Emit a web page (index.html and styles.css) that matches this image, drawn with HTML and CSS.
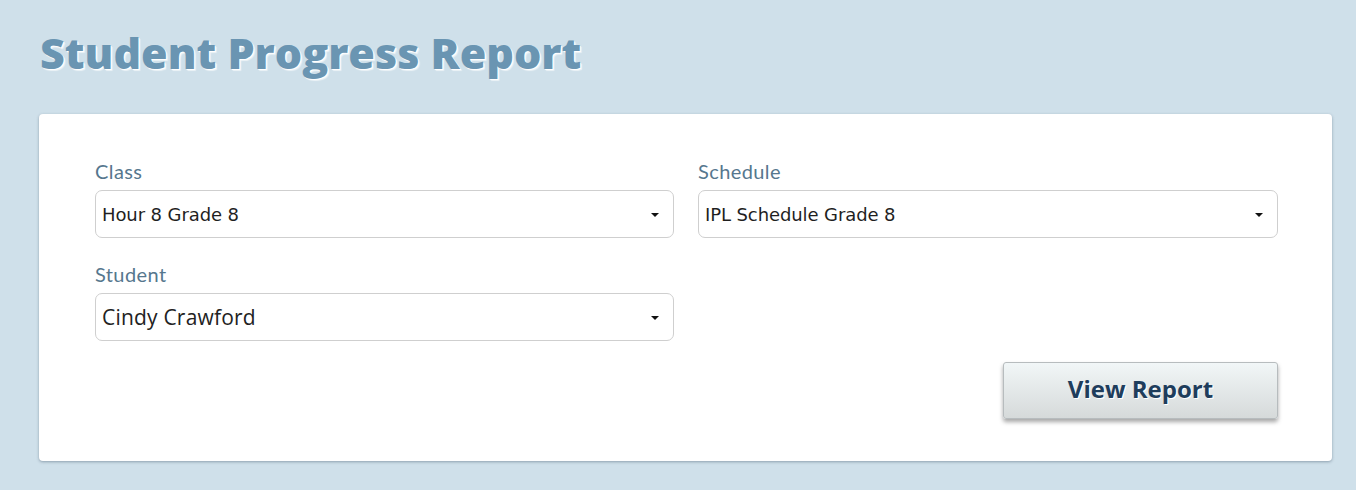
FILE: index.html
```html
<!DOCTYPE html>
<html>
<head>
<meta charset="utf-8">
<link rel="stylesheet" href="styles.css">
</head>
<body>
<h1 class="title">Student Progress Report</h1>
<div class="card">
  <div class="grid">
    <div class="field">
      <div class="label">Class</div>
      <div class="select"><span class="val">Hour 8 Grade 8</span><span class="caret"></span></div>
    </div>
    <div class="field">
      <div class="label">Schedule</div>
      <div class="select"><span class="val">IPL Schedule Grade 8</span><span class="caret"></span></div>
    </div>
    <div class="field">
      <div class="label">Student</div>
      <div class="select"><span class="val big">Cindy Crawford</span><span class="caret"></span></div>
    </div>
  </div>
  <div class="actions">
    <button class="btn">View Report</button>
  </div>
</div>
</body>
</html>
```
FILE: styles.css
```css
html, body { margin: 0; padding: 0; }
body {
  background: #cfe0ea;
  font-family: Lato, "Open Sans", sans-serif;
  width: 1356px;
  height: 490px;
  overflow: hidden;
}
.title {
  margin: 0;
  padding: 27px 0 0 40px;
  height: 86px;
  box-sizing: border-box;
  font-family: "Open Sans", sans-serif;
  font-weight: 800;
  font-size: 43px;
  line-height: 52px;
  color: #6a95b2;
  letter-spacing: 0;
  text-shadow: 1px 1px 0 #ffffff, 2px 2px 1px rgba(255,255,255,0.6);
}
.card {
  margin: 28px 24px 0 39px;
  background: #fff;
  border-radius: 4px;
  box-shadow: 0 1px 3px rgba(60,80,100,0.45);
  padding: 46px 54px 41px 56px;
  height: 347px;
  box-sizing: border-box;
}
.grid {
  display: grid;
  grid-template-columns: 579px 580px;
  column-gap: 24px;
  row-gap: 25px;
}
.label {
  font-size: 20px;
  letter-spacing: 0.4px;
  color: #56778e;
  line-height: 22px;
  margin-bottom: 8px;
}
.select {
  height: 48px;
  box-sizing: border-box;
  border: 1px solid #cfcfcf;
  border-radius: 7px;
  display: flex;
  align-items: center;
  padding: 0 14px 0 6px;
  justify-content: space-between;
}
.val {
  font-family: "DejaVu Sans", Verdana, sans-serif;
  font-size: 18px;
  color: #1f1f1f;
  letter-spacing: -0.1px;
}
.val.big {
  font-family: "Open Sans", sans-serif;
  font-size: 21px;
  color: #222;
  letter-spacing: 0.2px;
}
.caret {
  width: 0; height: 0;
  border-left: 4px solid transparent;
  border-right: 4px solid transparent;
  border-top: 4px solid #111;
  margin-top: 2px;
}
.actions {
  display: flex;
  justify-content: flex-end;
  margin-top: 21px;
}
.btn {
  width: 275px;
  height: 57px;
  border: 1px solid #b7bcbe;
  border-radius: 3px;
  background: linear-gradient(#f1f6f7, #d6dada);
  box-shadow: 0 3px 4px rgba(0,0,0,0.35);
  font-family: "Open Sans", sans-serif;
  font-weight: 700;
  font-size: 24px;
  line-height: 30px;
  padding: 0 0 3px;
  color: #1e3d5c;
  text-shadow: 1px 1px 0 #fff;
  cursor: pointer;
}
```
